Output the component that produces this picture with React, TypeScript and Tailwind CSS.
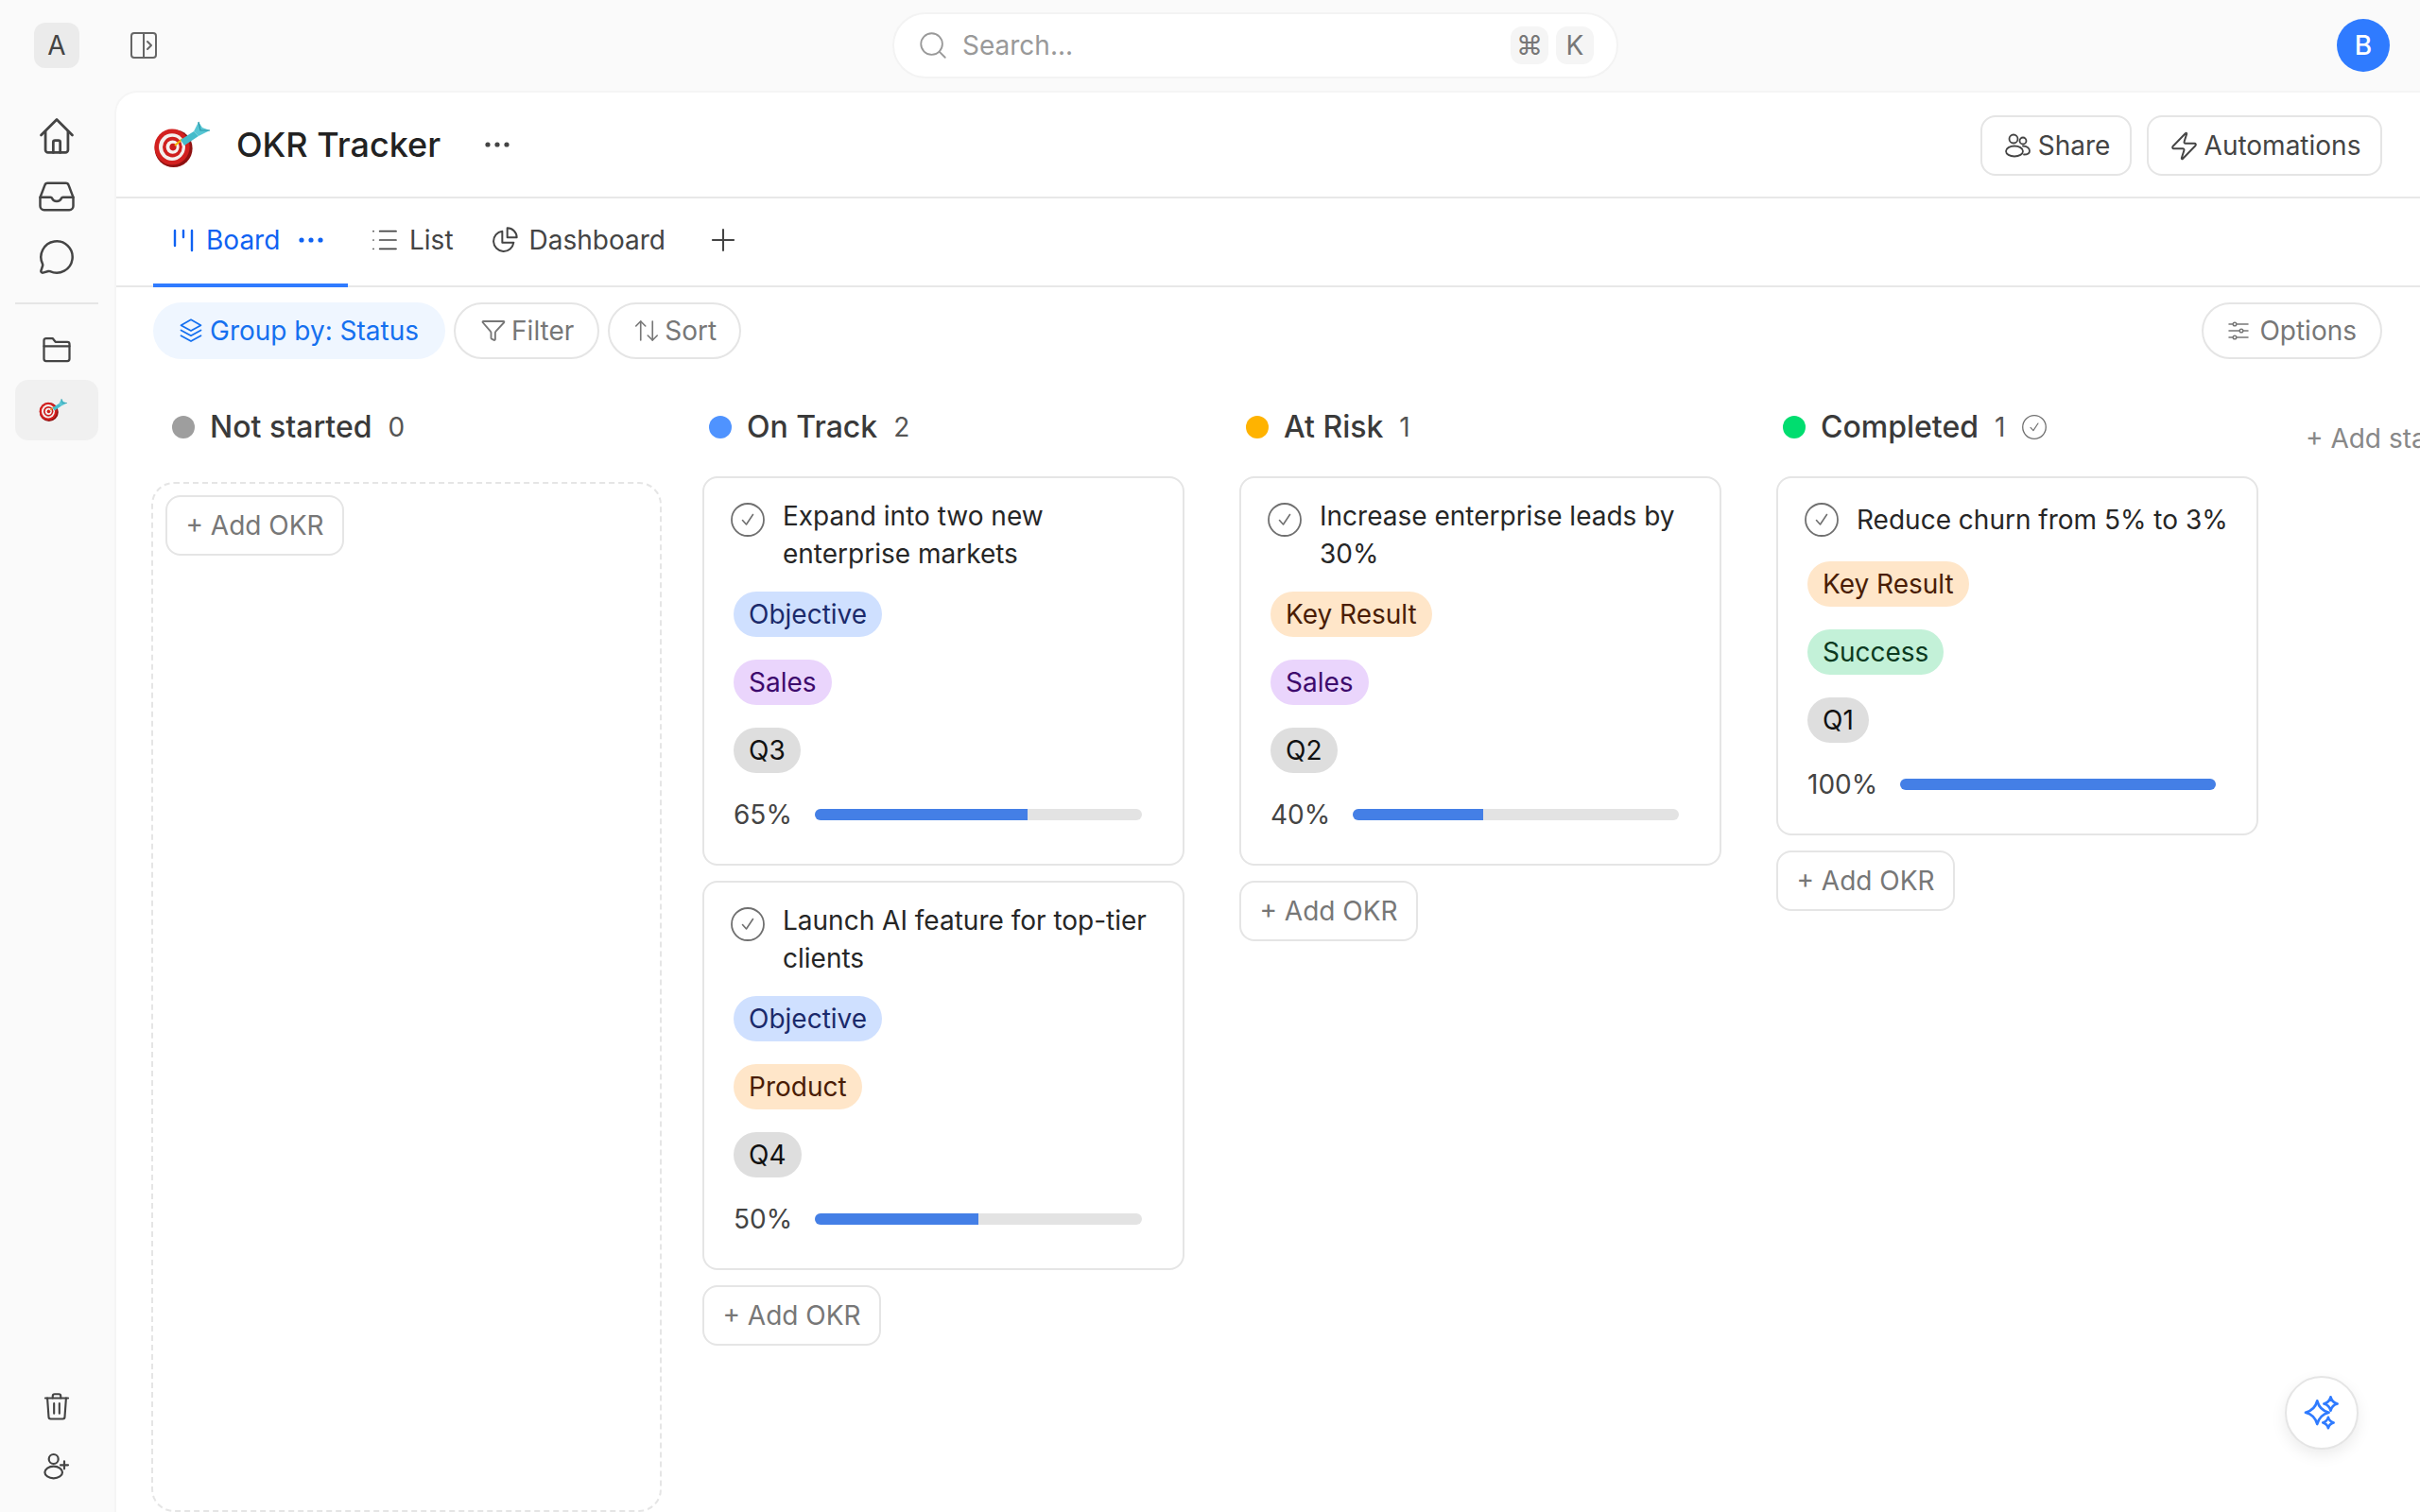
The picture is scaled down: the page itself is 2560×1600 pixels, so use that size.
import type { ReactNode } from "react";
import { ArrowUpDown, List, MessageCircle, Plus, Search, Zap } from "lucide-react";

/* ── Drawn icons ────────────────────────────────────────────────── */

function Outline({ size = 32, className, children }: { size?: number; className?: string; children: ReactNode }) {
  return (
    <svg
      width={size}
      height={size}
      viewBox="0 0 24 24"
      fill="none"
      stroke="currentColor"
      strokeWidth="1.5"
      strokeLinecap="round"
      strokeLinejoin="round"
      className={className}
    >
      {children}
    </svg>
  );
}

function Dots({ className }: { className?: string }) {
  return (
    <svg width="26" height="8" viewBox="0 0 26 8" fill="currentColor" className={className}>
      <circle cx="3" cy="4" r="2.6" />
      <circle cx="13" cy="4" r="2.6" />
      <circle cx="23" cy="4" r="2.6" />
    </svg>
  );
}

function TargetEmoji({ width, height }: { width: number; height: number }) {
  return (
    <svg width={width} height={height} viewBox="0 0 64 56">
      <circle cx="23.6" cy="32" r="20" fill="#8f1111" />
      <ellipse cx="22" cy="30.6" rx="18.6" ry="19" fill="#d2201f" />
      <ellipse cx="22" cy="30.6" rx="14" ry="14.4" fill="#f4f0ee" />
      <ellipse cx="22.4" cy="30.6" rx="10.4" ry="10.8" fill="#cf1f1e" />
      <ellipse cx="22.6" cy="30.6" rx="7" ry="7.2" fill="#f6f2f0" />
      <ellipse cx="23" cy="30.6" rx="3.6" ry="3.8" fill="#cb1d1c" />
      <path d="M25 29 33 22" stroke="#f5b301" strokeWidth="2" />
      <path d="M31 23 45 14 50 19 35 29Z" fill="#45bccb" />
      <path d="M45 14 50 4 54 10 62 13 54 17 50 19Z" fill="#57c6d4" />
      <path d="M50 4 52 13 62 13" fill="none" stroke="#2d97a8" strokeWidth="1.2" />
    </svg>
  );
}

function CheckCircle({ size = 36 }: { size?: number }) {
  return (
    <svg width={size} height={size} viewBox="0 0 36 36" fill="none" stroke="#707070" strokeLinecap="round" strokeLinejoin="round" className="shrink-0">
      <circle cx="18" cy="18" r="17" strokeWidth="1.8" />
      <path d="M12.5 18.5 16.5 23 23.5 12.5" strokeWidth="1.6" />
    </svg>
  );
}

function star(cx: number, cy: number, r: number) {
  const k = r * 0.2;
  return `M${cx} ${cy - r}Q${cx + k} ${cy - k} ${cx + r} ${cy}Q${cx + k} ${cy + k} ${cx} ${cy + r}Q${cx - k} ${cy + k} ${cx - r} ${cy}Q${cx - k} ${cy - k} ${cx} ${cy - r}Z`;
}

/* ── Small pieces ───────────────────────────────────────────────── */

const TAG_STYLES: Record<string, string> = {
  Objective: "bg-[#cfe0ff] text-[#1b2a6b]",
  Sales: "bg-[#ead5fc] text-[#3d0a6d]",
  "Key Result": "bg-[#ffe6c9] text-[#4a1d05]",
  Product: "bg-[#ffe6c9] text-[#4a1d05]",
  Success: "bg-[#c3f1d8] text-[#0b3a1f]",
  Quarter: "bg-[#dedede] text-[#111111]",
};

function Tag({ label, tone }: { label: string; tone?: string }) {
  return (
    <span className={`self-start h-[48px] px-[16px] rounded-full flex items-center text-[28px] ${TAG_STYLES[tone ?? label]}`}>
      {label}
    </span>
  );
}

function AddOkr() {
  return (
    <button
      type="button"
      className="self-start h-[64px] w-[189px] rounded-[16px] border-2 border-[#e5e5e5] bg-white flex items-center justify-center text-[28px] text-[#777777]"
    >
      + Add OKR
    </button>
  );
}

type Okr = { title: string; type: string; team: string; quarter: string; progress: number };

function OkrCard({ title, type, team, quarter, progress }: Okr) {
  return (
    <div className="rounded-[16px] border-2 border-[#e5e5e5] bg-white px-[28px] pt-[20px] pb-[32px] flex flex-col">
      <div className="flex items-start gap-[19px] min-h-[48px]">
        <span className="mt-[6px]">
          <CheckCircle />
        </span>
        <span className="self-center text-[28px] leading-[40px] text-[#262626]">{title}</span>
      </div>
      <div className="mt-[20px] ml-[3px] mr-[15px] flex flex-col gap-[24px]">
        <Tag label={type} />
        <Tag label={team} />
        <Tag label={quarter} tone="Quarter" />
        <div className="flex items-center gap-[24px] h-[40px]">
          <span className="text-[28px] text-[#444444]">{progress}%</span>
          <div className="flex-1 h-[12px] rounded-full bg-[#e3e3e3] overflow-hidden">
            <div className="h-full bg-[#447fe6]" style={{ width: `${progress}%` }} />
          </div>
        </div>
      </div>
    </div>
  );
}

type Column = { name: string; dot: string; okrs: Okr[]; done?: boolean };

const COLUMNS: Column[] = [
  { name: "Not started", dot: "bg-[#9e9e9e]", okrs: [] },
  {
    name: "On Track",
    dot: "bg-[#4f93ff]",
    okrs: [
      { title: "Expand into two new enterprise markets", type: "Objective", team: "Sales", quarter: "Q3", progress: 65 },
      { title: "Launch AI feature for top-tier clients", type: "Objective", team: "Product", quarter: "Q4", progress: 50 },
    ],
  },
  {
    name: "At Risk",
    dot: "bg-[#ffb300]",
    okrs: [{ title: "Increase enterprise leads by 30%", type: "Key Result", team: "Sales", quarter: "Q2", progress: 40 }],
  },
  {
    name: "Completed",
    dot: "bg-[#00dd6f]",
    done: true,
    okrs: [{ title: "Reduce churn from 5% to 3%", type: "Key Result", team: "Success", quarter: "Q1", progress: 100 }],
  },
];

function BoardColumn({ name, dot, okrs, done }: Column) {
  return (
    <div className="w-[540px] shrink-0 flex flex-col">
      <div className="h-[48px] px-[22px] flex items-center shrink-0">
        <span className={`w-[24px] h-[24px] rounded-full ${dot}`} />
        <span className="ml-[16px] text-[32px] font-medium text-[#3a3a3a]">{name}</span>
        <span className="ml-[17px] text-[28px] text-[#555555]">{okrs.length}</span>
        {done && (
          <span className="ml-[18px] flex">
            <CheckCircle size={26} />
          </span>
        )}
      </div>
      {okrs.length === 0 ? (
        <div className="mt-[34px] flex-1 rounded-[24px] border-2 border-dashed border-[#e5e5e5] px-[13px] pt-[12px] flex flex-col">
          <AddOkr />
        </div>
      ) : (
        <div className="mt-[28px] px-[15px] flex flex-col gap-[16px]">
          {okrs.map((okr) => (
            <OkrCard key={okr.title} {...okr} />
          ))}
          <AddOkr />
        </div>
      )}
    </div>
  );
}

function ToolButton({ icon, label, className }: { icon: ReactNode; label: string; className?: string }) {
  return (
    <button
      type="button"
      className={`h-[60px] rounded-full flex items-center text-[28px] ${className ?? "border-2 border-[#e5e5e5] bg-white text-[#777777] px-[25px]"}`}
    >
      {icon}
      {label}
    </button>
  );
}

function SideItem({ children, active }: { children: ReactNode; active?: boolean }) {
  return (
    <div className={`h-[64px] rounded-[14px] flex items-center justify-center text-[#444444] ${active ? "bg-[#f0f0f0]" : ""}`}>
      {children}
    </div>
  );
}

/* ── Page ───────────────────────────────────────────────────────── */

export default function App() {
  return (
    <div className="relative w-screen h-screen overflow-hidden bg-[#fafafa] flex flex-col font-[family-name:Inter,sans-serif]">
      {/* Top bar */}
      <header className="h-[96px] shrink-0 pl-[36px] pr-[32px] flex items-center justify-between">
        <div className="flex items-center gap-[36px]">
          <div className="w-[48px] h-[48px] rounded-[12px] bg-[#ebebeb] flex items-center justify-center text-[28px] text-[#444444]">A</div>
          <div className="w-[64px] h-[48px] flex items-center justify-center text-[#666666]">
            <svg width="32" height="32" viewBox="0 0 32 32" fill="none" stroke="currentColor" strokeWidth="2" strokeLinecap="round" strokeLinejoin="round">
              <rect x="3" y="3" width="26" height="26" rx="3" />
              <path d="M16 3v26M20 12l4 4-4 4" />
            </svg>
          </div>
        </div>

        <div className="w-[768px] h-[70px] rounded-full border-2 border-[#f3f3f3] bg-white pl-[24px] pr-[24px] flex items-center">
          <Search size={34} strokeWidth={1.3} className="text-[#999999]" />
          <span className="ml-[14px] flex-1 text-[28px] text-[#999999]">Search...</span>
          <div className="flex gap-[8px] text-[28px] text-[#777777]">
            <span className="w-[40px] h-[40px] rounded-[12px] bg-[#f5f5f5] flex items-center justify-center">⌘</span>
            <span className="w-[40px] h-[40px] rounded-[12px] bg-[#f5f5f5] flex items-center justify-center">K</span>
          </div>
        </div>

        <div className="w-[56px] h-[56px] rounded-full bg-[#2f7bff] flex items-center justify-center text-[28px] font-medium text-white">B</div>
      </header>

      <div className="flex-1 min-h-0 flex">
        {/* Sidebar */}
        <aside className="w-[121px] shrink-0 pl-[16px] pr-[17px] pt-[16px] pb-[16px] flex flex-col">
          <SideItem>
            <Outline size={44}>
              <path d="M3 11.5 12 2.5l9 9" />
              <path d="M5.5 9.5V20A1.5 1.5 0 0 0 7 21.5h10a1.5 1.5 0 0 0 1.5-1.5V9.5" />
              <path d="M10 21.5v-6a1 1 0 0 1 1-1h2a1 1 0 0 1 1 1v6" />
            </Outline>
          </SideItem>
          <SideItem>
            <Outline size={40}>
              <path d="M6.3 3.5h11.4a2 2 0 0 1 1.9 1.4l2.9 7.6v5.5a2.5 2.5 0 0 1-2.5 2.5H4a2.5 2.5 0 0 1-2.5-2.5v-5.5l2.9-7.6a2 2 0 0 1 1.9-1.4z" />
              <path d="M1.5 12.5H8c.6 0 1 .4 1.2.9.4 1 1.4 1.6 2.8 1.6s2.4-.6 2.8-1.6c.2-.5.6-.9 1.2-.9h6.5" />
            </Outline>
          </SideItem>
          <SideItem>
            <MessageCircle size={40} strokeWidth={1.5} />
          </SideItem>
          <div className="mt-[16px] mb-[16px] h-[2px] bg-[#e5e5e5]" />
          <SideItem>
            <Outline size={36}>
              <path d="M3 7V5.5A1.5 1.5 0 0 1 4.5 4h4.6l2 2.5h8.4A1.5 1.5 0 0 1 21 8v10.5a1.5 1.5 0 0 1-1.5 1.5h-15A1.5 1.5 0 0 1 3 18.5V7z" />
              <path d="M3 9.5h18" />
            </Outline>
          </SideItem>
          <SideItem active>
            <span className="flex -ml-[8px]">
              <TargetEmoji width={32} height={28} />
            </span>
          </SideItem>
          <div className="flex-1" />
          <SideItem>
            <Outline size={34}>
              <path d="M3.5 6h17" />
              <path d="M9 6V4.5A1.5 1.5 0 0 1 10.5 3h3A1.5 1.5 0 0 1 15 4.5V6" />
              <path d="M5 6l1 14a1.5 1.5 0 0 0 1.5 1.5h9A1.5 1.5 0 0 0 18 20l1-14" />
              <path d="M10 10v7.5M14 10v7.5" />
            </Outline>
          </SideItem>
          <SideItem>
            <svg width="32" height="32" viewBox="0 0 32 32" fill="none" stroke="currentColor" strokeWidth="2.2" strokeLinecap="round">
              <circle cx="12.7" cy="8" r="5" />
              <ellipse cx="12.7" cy="22" rx="9.3" ry="6.3" />
              <path d="M24 10.3v8M20 14.3h8" />
            </svg>
          </SideItem>
        </aside>

        {/* Main panel */}
        <main className="flex-1 min-w-0 flex flex-col bg-white rounded-tl-[24px] border-l-2 border-t-2 border-[#f5f5f5]">
          {/* Title row */}
          <div className="h-[112px] shrink-0 pl-[37px] pr-[40px] flex items-center border-b-2 border-[#e8e8e8]">
            <TargetEmoji width={64} height={56} />
            <h1 className="ml-[26px] text-[36px] font-medium text-[#222222]">OKR Tracker</h1>
            <Dots className="ml-[47px] text-[#444444]" />
            <div className="ml-auto mt-[2px] flex gap-[16px]">
              <button type="button" className="h-[64px] w-[160px] rounded-[16px] border-2 border-[#e5e5e5] flex items-center justify-center gap-[6px] text-[28px] text-[#444444]">
                <svg width="32" height="32" viewBox="0 0 32 32" fill="none" stroke="currentColor" strokeWidth="1.8" strokeLinecap="round">
                  <circle cx="12" cy="9" r="4.5" />
                  <circle cx="22" cy="11" r="3.5" />
                  <ellipse cx="13" cy="22" rx="9" ry="5.5" />
                  <path d="M22 16.5c4 0 7 2.3 7 5.2 0 2.4-2.5 3.8-6 3.8" />
                </svg>
                Share
              </button>
              <button type="button" className="h-[64px] w-[249px] rounded-[16px] border-2 border-[#e5e5e5] flex items-center justify-center gap-[5px] text-[28px] text-[#444444]">
                <Zap size={33} strokeWidth={1.4} />
                Automations
              </button>
            </div>
          </div>

          {/* Tabs */}
          <div className="h-[94px] shrink-0 pl-[39px] flex items-stretch border-b-2 border-[#e8e8e8] text-[28px] text-[#444444]">
            <div className="w-[206px] pl-[20px] pb-[2px] flex items-center border-b-4 border-[#2f7bff] -mb-[2px] text-[#0f62f2]">
              <svg width="24" height="28" viewBox="0 0 24 28" fill="none" stroke="currentColor" strokeWidth="2.4" strokeLinecap="round" className="shrink-0">
                <path d="M3 4v16M12 4v7M21 4v21" />
              </svg>
              <span className="ml-[12px]">Board</span>
              <Dots className="ml-[20px]" />
            </div>
            <div className="ml-[23px] pb-[4px] flex items-center gap-[10px]">
              <List size={32} strokeWidth={1.3} />
              List
            </div>
            <div className="ml-[38px] pb-[4px] flex items-center gap-[10px]">
              <Outline size={32}>
                <path d="M10 5a8 8 0 1 0 9 9h-9z" />
                <path d="M14 2.5a7.5 7.5 0 0 1 7.5 7.5H14z" />
              </Outline>
              Dashboard
            </div>
            <div className="ml-[42px] pb-[4px] flex items-center">
              <Plus size={38} strokeWidth={1.3} />
            </div>
          </div>

          {/* Toolbar */}
          <div className="shrink-0 pt-[16px] pl-[39px] pr-[40px] flex items-center gap-[9px]">
            <ToolButton
              className="bg-[#eff6ff] text-[#1570ef] pl-[26px] pr-[28px] gap-[6px]"
              label="Group by: Status"
              icon={
                <Outline size={28}>
                  <path d="M12 2l9 5-9 5-9-5z" />
                  <path d="M3 11.5l9 5 9-5" />
                  <path d="M3 16.5l9 5 9-5" />
                </Outline>
              }
            />
            <ToolButton
              className="border-2 border-[#e5e5e5] bg-white text-[#777777] px-[25px] gap-[4px]"
              label="Filter"
              icon={
                <Outline size={30}>
                  <path d="M3.5 4h17c.5 0 .8.6.4 1L14 12.5c-.3.3-.5.8-.5 1.2v5.5c0 .5-.5.9-1 .7l-2-1a1 1 0 0 1-.5-.8v-4.4c0-.4-.2-.9-.5-1.2L3 5c-.4-.4-.1-1 .5-1z" />
                </Outline>
              }
            />
            <ToolButton
              className="border-2 border-[#e5e5e5] bg-white text-[#777777] px-[24px] gap-[4px]"
              label="Sort"
              icon={<ArrowUpDown size={30} strokeWidth={1.3} />}
            />
            <div className="flex-1" />
            <ToolButton
              className="border-2 border-[#e5e5e5] bg-white text-[#777777] px-[25px] gap-[10px]"
              label="Options"
              icon={
                <Outline size={24}>
                  <path d="M2 5h20M2 12h20M2 19h20" />
                  <circle cx="8" cy="5" r="1.8" fill="white" />
                  <circle cx="15" cy="12" r="1.8" fill="white" />
                  <circle cx="8" cy="19" r="1.8" fill="white" />
                </Outline>
              }
            />
          </div>

          {/* Board */}
          <div className="flex-1 min-h-0 mt-[48px] pl-[37px] flex gap-[28px] overflow-hidden">
            {COLUMNS.map((column) => (
              <BoardColumn key={column.name} {...column} />
            ))}
            <div className="shrink-0 pl-[7px] pt-[16px] text-[28px] leading-[40px] text-[#888888] whitespace-nowrap">+ Add status</div>
          </div>
        </main>
      </div>

      {/* Assistant button */}
      <button
        type="button"
        className="absolute right-[65px] bottom-[66px] w-[78px] h-[78px] rounded-full border-2 border-[#e5e5e5] bg-white shadow-[0_6px_16px_rgba(0,0,0,0.08)] flex items-center justify-center"
      >
        <svg width="74" height="74" viewBox="0 0 78 78" fill="none" stroke="#2f7bff" strokeWidth="2.8" strokeLinejoin="round">
          <path d={star(34, 38.7, 13)} />
          <path d={star(49, 29, 7.5)} />
          <path d={star(46.3, 50, 6)} />
        </svg>
      </button>
    </div>
  );
}
